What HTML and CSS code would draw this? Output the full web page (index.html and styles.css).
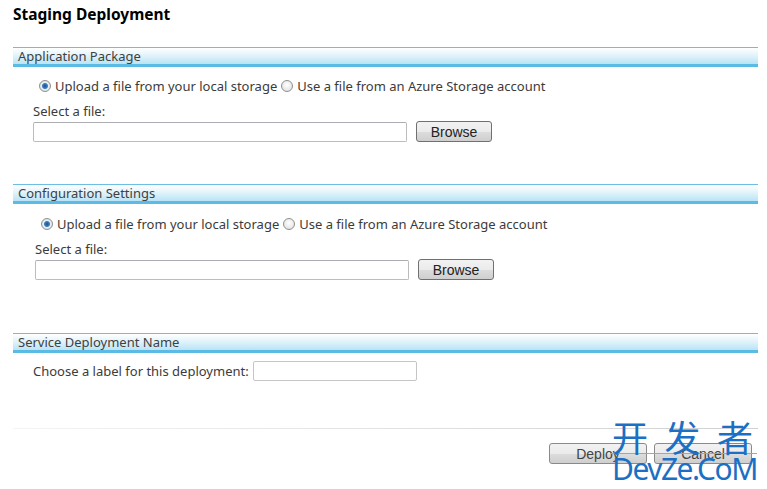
FILE: index.html
```html
<!DOCTYPE html>
<html lang="en">
<head>
    <meta charset="UTF-8">
    <title>Staging Deployment</title>
    <link rel="stylesheet" href="styles.css">
</head>
<body>
    <div class="page">
        <h1>Staging Deployment</h1>

        <!-- Application package -->
        <div class="section">
            <div class="section-header">Application Package</div>
            <div class="section-body">
                <div class="radio-row">
                    <label><span class="radio checked"></span>Upload a file from your local storage</label>
                    <label><span class="radio"></span>Use a file from an Azure Storage account</label>
                </div>
                <div class="field-label">Select a file:</div>
                <div class="file-row">
                    <input type="text" class="file-input">
                    <button class="btn">Browse</button>
                </div>
            </div>
        </div>

        <!-- Configuration settings -->
        <div class="section second">
            <div class="section-header">Configuration Settings</div>
            <div class="section-body shifted">
                <div class="radio-row">
                    <label><span class="radio checked"></span>Upload a file from your local storage</label>
                    <label><span class="radio"></span>Use a file from an Azure Storage account</label>
                </div>
                <div class="field-label">Select a file:</div>
                <div class="file-row">
                    <input type="text" class="file-input">
                    <button class="btn">Browse</button>
                </div>
            </div>
        </div>

        <!-- Deployment name -->
        <div class="section third">
            <div class="section-header">Service Deployment Name</div>
            <div class="section-body">
                <div class="name-row">
                    <span>Choose a label for this deployment:</span>
                    <input type="text" class="name-input">
                </div>
            </div>
        </div>

        <div class="footer">
            <button class="btn wide">Deploy</button>
            <button class="btn wide">Cancel</button>
        </div>
    </div>

    <div class="watermark">
        <div class="wm-cn"><span>开</span><span>发</span><span>者</span></div>
        <div class="wm-en">DevZe.CoM</div>
    </div>
</body>
</html>
```

FILE: styles.css
```css
body { margin: 0; background: #fff; font-family: "Noto Sans", "Open Sans", sans-serif; font-size: 13px; color: #3b3b3b; }
.page { padding: 4px 9px 0 13px; }
h1 { margin: 0; font-size: 15.5px; font-weight: bold; color: #000; line-height: 20px; }

.section { margin-top: 23px; }
.section.second { margin-top: 42px; }
.section.third { margin-top: 53px; }
.section-header { border-top: 1px solid #6cbfe3; border-bottom: 3px solid #5bbbe5; background: linear-gradient(to bottom, #ffffff 0%, #e6f5fb 40%, #b9e4f6 100%); height: 16px; line-height: 16px; padding-left: 5px; color: #404040; }
.section-body { padding-left: 20px; }
.section-body.shifted { padding-left: 22px; }

.radio-row { display: flex; gap: 4px; margin-top: 10px; margin-left: 6px; height: 18px; align-items: center; }
.shifted .radio-row { margin-top: 11px; }
.radio-row label { display: flex; align-items: center; gap: 4px; }
.radio { width: 10px; height: 10px; border-radius: 50%; border: 1px solid #8e8f8f; background: radial-gradient(circle at 50% 40%, #fff, #dcdcdc); display: inline-block; }
.radio.checked { background: radial-gradient(circle, #1e4f8c 0, #3c7fc4 2.5px, #e8eef3 3.5px, #d6d6d6 100%); }

.field-label { margin-top: 8px; line-height: 16px; }
.file-row { display: flex; align-items: center; gap: 9px; margin-top: 2px; }
.file-input { width: 370px; height: 16px; border: 1px solid #bcbcbc; border-top-color: #abadb3; border-radius: 2px; padding: 1px; margin: 0; }
.btn { font-family: "Liberation Sans", Arial, sans-serif; font-size: 14px; color: #222; height: 21px; width: 76px; padding: 0; border: 1px solid #707070; border-radius: 3px; background: linear-gradient(to bottom, #f2f2f2 0%, #ebebeb 50%, #dddddd 51%, #cfcfcf 100%); }
.btn.wide { width: 98px; color: #444; border-color: #8a8a8a; }

.name-row { display: flex; align-items: center; gap: 4px; margin-top: 8px; }
.name-input { width: 160px; height: 16px; border: 1px solid #c5c5c5; border-radius: 2px; padding: 1px; margin: 0; }

.footer { border-top: 1px solid; border-image: linear-gradient(to right, #f4f4f4, #d0d0d0) 1; margin-top: 47px; padding: 14px 6px 0 0; display: flex; justify-content: flex-end; gap: 7px; }

.watermark { position: absolute; left: 610px; top: 420px; width: 147px; color: #1b6fc4; line-height: 1; white-space: nowrap; }
.wm-cn { font-family: "Noto Sans CJK SC", sans-serif; font-size: 36px; line-height: 33px; display: flex; justify-content: space-between; padding: 0 4px 0 2px; border-bottom: 1px solid #4fc3e8; }
.wm-en { font-family: "Noto Sans", sans-serif; font-size: 30px; letter-spacing: -1.5px; padding-left: 2px; }
```
